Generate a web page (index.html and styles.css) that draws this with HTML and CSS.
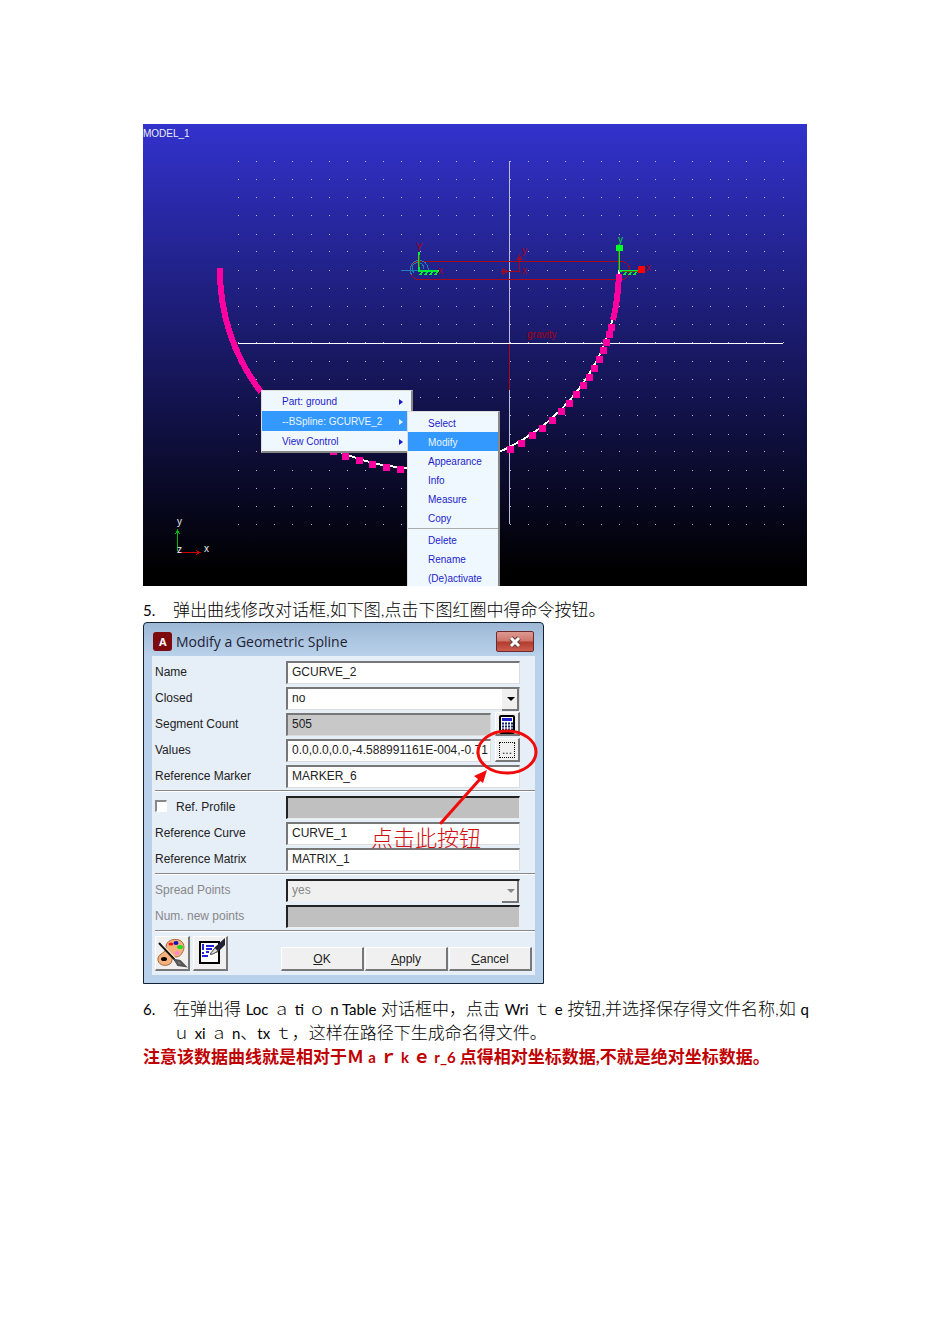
FILE: index.html
```
<!DOCTYPE html>
<html lang="zh-CN">
<head>
  <meta charset="UTF-8">
  <title>Modify a Geometric Spline</title>
  <meta name="viewport" content="width=device-width, initial-scale=1">
  <link rel="stylesheet" href="styles.css">
</head>
<body>
<main>
<div class="scene">
  <svg viewBox="0 0 664 462" role="img" aria-label="MODEL_1">
    <text x="0" y="13">MODEL_1</text>
    <!-- working grid -->
    <path class="grid" d="M95 37.5h546M95 55.5h546M95 73.5h546M95 91.5h546M95 110.5h546M95 127.5h546M95 146.5h546M95 164.5h546M95 182.5h546M95 200.5h546M95 218.5h546M95 237.5h546M95 255.5h546M95 273.5h546M95 291.5h546M95 310.5h546M95 327.5h546M95 346.5h546M95 364.5h546M95 382.5h546M95 400.5h546"/>
    <path class="axis-x" d="M95 219.5H640"/>
    <path class="axis-y" d="M366.5 37V219M366.5 266V400"/>
    <path class="red" d="M366.5 220V266"/>
    <!-- link between the two markers -->
    <path class="red" d="M276 137.5H478M276 155.5H478"/>
    <path class="red" d="M478 137.5a9 9 0 0 1 0 18M276 137.5a9 9 0 0 0 0 18"/>
    <path class="red" d="M376.5 133V147.5H358M374.5 135l2-4 2 4zM359 144.5l6 3-6 3z"/>
    <text class="red-text" x="379" y="130">y</text>
    <text class="red-text" x="379" y="150">x</text>
    <text class="red-text" x="384" y="214">gravity</text>
    <!-- spline -->
    <path class="curve" d="M77 144A199.5 199.5 0 0 0 476 146"/>
    <path class="dense" d="M77 144A199.5 199.5 0 0 0 118 268M476 150Q475 176 470 196"/>
    <path class="knots" d="M190 327h0M202 332h0M216 336h0M229 340h0M243 343h0M257 345h0M367 325h0M378 319h0M389 311h0M399 304h0M409 296h0M418 287h0M426 279h0M433 270h0M440 261h0M446 253h0M451 244h0M456 235h0M460 226h0M463 218h0M466 210h0M468 203h0"/>
    <!-- left marker -->
    <path class="teal" d="M258 146.5h18M269 151a9 9 0 1 1 16-4M271 149a6 6 0 1 1 10-4"/>
    <path class="green" d="M276 148V128M276 147H295M280 147l-3 4M285 147l-3 4M290 147l-3 4M295 147l-3 4"/>
    <path class="olive" d="M276.5 143V131"/>
    <text class="red-text" x="273" y="127">Y</text>
    <text class="red-text" x="295" y="150">x</text>
    <!-- right marker -->
    <path class="green" d="M476 146V124M476 147H496M484 147l-3 4M489 147l-3 4M494 147l-3 4"/>
    <path class="olive" d="M475.5 127V146M479 147.5H496"/>
    <path class="green-box" d="M473 121h7v6h-7z"/>
    <path class="red-box" d="M495 142h7v7h-7z"/>
    <text class="green-text" x="475" y="119">y</text>
    <text class="red-text" x="503" y="147">x</text>
    <!-- view triad -->
    <path class="triad-y" d="M34.5 427V406M32.5 410l2-4 2 4"/>
    <path class="triad-x" d="M36 428.5H57M53 426.5l4 2-4 2"/>
    <text x="34" y="401">y</text>
    <text x="34" y="429">z</text>
    <text x="61" y="428">x</text>
  </svg>
  <div class="menu main-menu">
    <button type="button">Part: ground</button>
    <button type="button" class="on">--BSpline: GCURVE_2</button>
    <button type="button">View Control</button>
  </div>
  <div class="menu sub-menu">
    <button type="button">Select</button>
    <button type="button" class="on">Modify</button>
    <button type="button">Appearance</button>
    <button type="button">Info</button>
    <button type="button">Measure</button>
    <button type="button">Copy</button>
    <hr>
    <button type="button">Delete</button>
    <button type="button">Rename</button>
    <button type="button">(De)activate</button>
  </div>
</div>

<p class="step"><span class="num">5.</span><span>弹出曲线修改对话框,如下图,点击下图红圈中得命令按钮。</span></p>

<form class="dialog">
  <header>
    <svg width="19" height="19" viewBox="0 0 19 19" aria-hidden="true">
      <rect width="19" height="19" rx="3" fill="#7d0a0c"/>
      <text x="6" y="14">A</text>
    </svg>
    <h1>Modify a Geometric Spline</h1>
    <button type="button" class="close" aria-label="Close">
      <svg width="14" height="12" viewBox="0 0 14 12">
        <path d="M3 2l8 8M11 2l-8 8" stroke="#63403f" stroke-width="5"/>
        <path d="M3 2l8 8M11 2l-8 8" stroke="#fff" stroke-width="3"/>
      </svg>
    </button>
  </header>
  <div class="client">
    <div class="row"><label for="name">Name</label><input id="name" type="text" value="GCURVE_2"></div>
    <div class="row"><label for="closed">Closed</label>
      <span class="drop"><select id="closed"><option>no</option><option>yes</option></select></span></div>
    <div class="row with-button"><label for="count">Segment Count</label><input id="count" type="text" value="505" readonly>
      <button type="button" class="tool" aria-label="Calculate">
        <svg width="18" height="20" viewBox="0 0 18 20">
          <rect x="1" y="1" width="16" height="19" rx="2"/>
          <path d="M3 3h12v15H3z" fill="#fff"/>
          <path d="M4 4h10v3H4z" fill="#22c"/>
          <path d="M4 9.5h11M4 12.5h11M4 15.5h11" stroke="#126" stroke-width="2" stroke-dasharray="2 1"/>
        </svg>
      </button></div>
    <div class="row with-button"><label for="values">Values</label><input id="values" type="text" value="0.0,0.0,0.0,-4.588991161E-004,-0.71">
      <button type="button" class="tool"><span>...</span></button></div>
    <div class="row"><label for="marker">Reference Marker</label><input id="marker" type="text" value="MARKER_6"></div>
    <hr>
    <div class="row"><label><input type="checkbox">Ref. Profile</label><input type="text" aria-label="Ref. Profile" disabled></div>
    <div class="row"><label for="curve">Reference Curve</label><input id="curve" type="text" value="CURVE_1"></div>
    <div class="row"><label for="matrix">Reference Matrix</label><input id="matrix" type="text" value="MATRIX_1"></div>
    <hr>
    <div class="row dim"><label for="spread">Spread Points</label>
      <span class="drop"><select id="spread" disabled><option>yes</option></select></span></div>
    <div class="row dim"><label for="points">Num. new points</label><input id="points" type="text" disabled></div>
    <hr>
    <footer>
      <button type="button" class="icon" aria-label="Appearance">
        <svg width="32" height="32" viewBox="0 0 32 32">
          <path d="M10 10C10 4 17 1 23 3C29 5 29 12 26 16C24 20 21 20 18 20C15 20 17 25 14 27C9 30 1 28 2 21C3 16 10 17 10 10z" fill="#f6b27c" stroke="#a4683b"/>
          <ellipse cx="15" cy="7" rx="2.5" ry="1.5" fill="#e11"/>
          <ellipse cx="20" cy="6" rx="2.5" ry="2" fill="#11b"/>
          <ellipse cx="24" cy="10" rx="3" ry="2" fill="#2d2"/>
          <ellipse cx="21" cy="16" rx="2.5" ry="2" fill="#f8c"/>
          <ellipse cx="8" cy="22" rx="3" ry="2" fill="#000"/>
          <path d="M3 6L21 25" stroke="#111" stroke-width="2"/>
          <path d="M5 6L22 24" stroke="#fff"/>
          <path d="M19 23l5 1 5 5-7-1z" fill="#777" stroke="#555" stroke-width="2"/>
        </svg>
      </button>
      <button type="button" class="icon" aria-label="Comments">
        <svg width="32" height="32" viewBox="0 0 32 32">
          <path d="M6 5h19v21H6z" fill="#fff" stroke="#000" stroke-width="2"/>
          <path d="M9 7v6M9 15v2M12 9h8M12 12h6M12 15h3M8 19h6" stroke="#22d" stroke-width="2"/>
          <path d="M16 18L21 10L31 1V8L24 15z" fill="#223"/>
          <path d="M16 17l5-6 3 3-5 3z" fill="#ddd" stroke="#555"/>
        </svg>
      </button>
      <span class="gap"></span>
      <button type="button"><u>O</u>K</button>
      <button type="button"><u>A</u>pply</button>
      <button type="button"><u>C</u>ancel</button>
    </footer>
  </div>
  <svg class="callout" width="180" height="140" viewBox="0 0 180 140" aria-hidden="true">
    <ellipse cx="144" cy="30" rx="29" ry="21"/>
    <path d="M78 101L118 56" stroke-linecap="round"/>
    <path class="head" d="M124 48L120 61L111 54z"/>
    <text x="8" y="124">点击此按钮</text>
  </svg>
</form>

<p class="step"><span class="num">6.</span><span>在弹出得 <i>Loc</i> ａ <i>ti</i> ｏ <i>n Table</i> 对话框中，点击 <i>Wri</i> ｔ <i>e</i> 按钮,并选择保存得文件名称,如 <i>q</i><br>ｕ <i>xi</i> ａ <i>n</i>、<i>tx</i> ｔ，这样在路径下生成命名得文件。</span></p>
<p class="note">注意该数据曲线就是相对于Ｍ <i>a</i> ｒ <i>k</i> ｅ <i>r_6</i> 点得相对坐标数据,不就是绝对坐标数据。</p>
</main>
</body>
</html>
```
FILE: styles.css
```
*{box-sizing:border-box;margin:0;padding:0}
body{background:#fff;color:#000;font-family:Lato,"Noto Sans CJK SC",sans-serif;font-size:17px;line-height:24px}
main{padding:124px 143px}
svg{display:block}

.scene{position:relative;overflow:hidden;background:linear-gradient(#3232cd,#000 97%)}
.scene svg{width:100%;height:auto;fill:none;shape-rendering:crispEdges}
.scene text{font-family:"Liberation Sans",sans-serif;font-size:10px;fill:#eee}
.scene .red-text{fill:#a80010}
.scene .green-text{fill:#0d3}
.grid{stroke:#bbc;stroke-dasharray:1 17.15}
.axis-x{stroke:#fff}
.axis-y{stroke:#bbd}
.red{stroke:#a80818}
.curve{stroke:#fff;stroke-width:2}
.dense{stroke:#ff00a0;stroke-width:6}
.knots{stroke:#ff00a0;stroke-width:7;stroke-linecap:square}
.teal{stroke:#1f7fb5}
.green{stroke:#0e3;stroke-width:2}
.olive{stroke:#685a10}
.green-box{fill:#0f2}
.red-box{fill:#f00}
.triad-y{stroke:#0b0}
.triad-x{stroke:#c00}

.menu{position:absolute;background:#f0f8ff;border:1px solid #ddd;border-right:2px solid #888;border-bottom:2px solid #888}
.menu button{display:block;width:100%;height:19px;border:0;background:none;color:#1c1ccc;font:10px/21px "Liberation Sans",sans-serif;text-align:left;padding-left:20px}
.menu .on{background:#39f;color:#e8f4ff}
.menu hr{border:0;border-top:1px solid #aaa;margin:1px 0}
.main-menu{left:118px;top:266px;width:152px}
.main-menu button{position:relative;height:20px;line-height:22px}
.main-menu button::after{content:"";position:absolute;right:8px;top:8px;border:3px solid transparent;border-left:4px solid;border-right:0}
.sub-menu{left:264px;top:287px;width:93px;padding-top:1px}

.step{display:flex;margin-top:12px;white-space:nowrap;font-weight:300}
.num{flex:none;width:30px;font-size:15px;font-weight:400}
.step i,.note i{font-style:normal;font-size:15px}
.step i{font-weight:400}
.note{color:#c00000;font-weight:bold;white-space:nowrap}

.dialog{position:relative;width:401px;max-width:100%;margin-bottom:13px;padding:0 8px 8px;border:1px solid #123;background:linear-gradient(#9db8d6,#b9d1ea 33px);border-radius:4px 4px 0 0;font:12px/26px "Liberation Sans",sans-serif;color:#222}
.dialog header{display:flex;align-items:center;height:33px;padding:4px 1px 0;gap:4px}
.dialog header text{font:bold 11px "Open Sans",sans-serif;fill:#fff}
.dialog h1{flex:1;font:14px/20px "Open Sans",sans-serif;color:#223}
.dialog button{border:1px solid #fff;border-right:2px solid #777;border-bottom:2px solid #777;background:#f0f0f0;font:12px/18px "Liberation Sans",sans-serif;color:#222}
.dialog .close{display:grid;place-items:center;width:38px;height:21px;border:1px solid #6b2b2e;border-radius:2px;background:linear-gradient(#dd9a92,#cf7468 48%,#b23a2c 52%,#cb5e50)}
.client{background:#e6eef8;padding:3px 0 4px 3px}
.client hr{height:2px;border:0;border-top:1px solid #888;border-bottom:1px solid #fff;margin:1px 0 2px}
.row{display:grid;grid-template-columns:131px 1fr;align-items:center;height:26px;padding-right:15px}
.with-button{grid-template-columns:131px 1fr 25px}
.row input[type=text],.row select{width:100%;height:23px;padding:0 4px 2px;border:1px solid #ddd;border-top:2px solid #777;border-left:2px solid #777;border-radius:0;background:#fff;font:12px/18px "Liberation Sans",sans-serif;color:#222}
.row input[readonly]{background:#c8c8c8}
.row input[type=text]:disabled,.row select:disabled{border-color:#222 #eee #eee #222;opacity:1}
.row input[type=text]:disabled{background:#c0c0c0}
.row #count{background:#c8c8c8}
.row input[type=checkbox]{appearance:none;width:12px;height:12px;margin-right:9px;border:2px solid #888;border-right:1px solid #fff;border-bottom:1px solid #fff;background:#fff;vertical-align:-1px}
.row select{appearance:none;display:block}
.row select:disabled{background:#f0f0f0;color:#888}
.dim{color:#888}
.drop{position:relative}
.drop::before{content:"";position:absolute;right:1px;top:2px;width:15px;height:20px;background:#f0f0f0;border-right:2px solid #777;border-bottom:2px solid #777}
.drop::after{content:"";position:absolute;right:5px;top:10px;border:4px solid transparent;border-top-color:#000;border-bottom:0}
.dim .drop::after{border-top-color:#888}
.row.with-button input{width:205px;padding-right:0}
.dialog .tool{width:25px;height:24px;display:grid;place-items:center}
.tool span{width:16px;height:16px;border:1px dotted #000;line-height:14px}
.dialog footer{display:flex;align-items:flex-end;gap:1px;padding:2px 3px 0 0}
.dialog footer button{width:83px;height:24px}
.dialog footer .icon{display:grid;place-items:center;width:35px;height:35px;margin-right:2px}
.gap{flex:1}
.callout{position:absolute;left:219px;top:99px;fill:none;stroke:#f00a0a;stroke-width:3}
.callout .head{fill:#f00a0a;stroke:none}
.callout text{fill:#d01010;stroke:none;font:300 22px "Noto Sans CJK SC",sans-serif}
```
